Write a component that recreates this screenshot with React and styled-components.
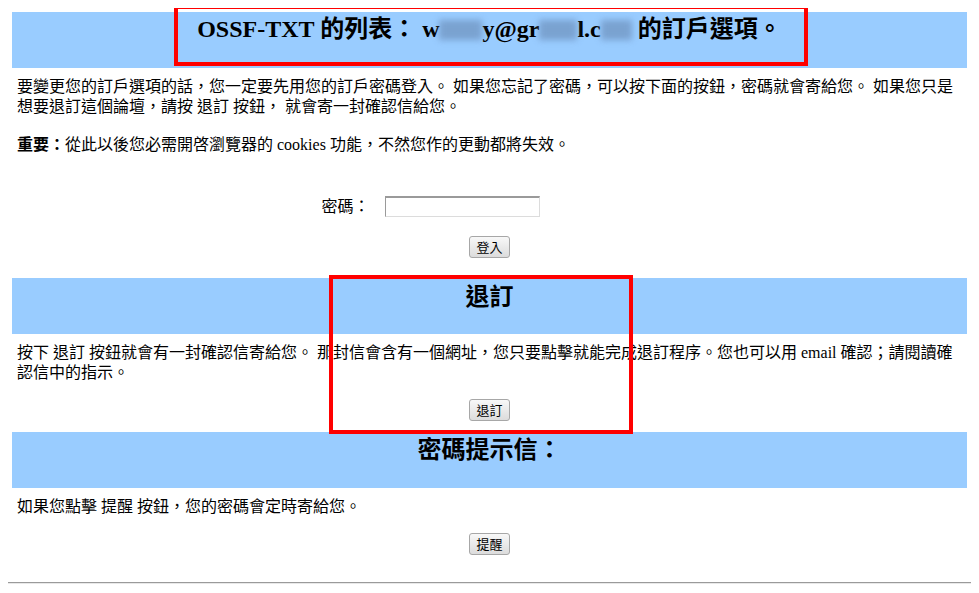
import styled, { createGlobalStyle } from "styled-components";

const GlobalStyle = createGlobalStyle`
  body {
    margin: 8px;
    background: #fff;
    color: #000;
    font-family: "Liberation Serif", "Noto Sans CJK TC", serif;
    font-size: 16px;
  }
`;

const Page = styled.div`
  position: relative;
`;

const Table = styled.div`
  display: flex;
  flex-direction: column;
  gap: 4px;
  padding: 4px;
`;

const Band = styled.div`
  height: 56px;
  box-sizing: border-box;
  padding: ${(props) => props.pad || 5}px 5px 0;
  background: #99ccff;
  text-align: center;
  font-weight: bold;
  font-size: 24px;
  line-height: 24px;
  white-space: nowrap;
`;

const Blur = styled.span`
  display: inline-block;
  width: ${(props) => props.w}px;
  height: 20px;
  vertical-align: -3px;
  background: rgba(96, 128, 170, 0.55);
  filter: blur(3px);
`;

const Cell = styled.div`
  padding: 5px;
  display: flex;
  flex-direction: column;
  padding-bottom: ${(props) => props.bottom || 5}px;
`;

const Para = styled.p`
  margin: ${(props) => props.top || 0}px 0 0;
  line-height: 20px;
`;

const LoginGrid = styled.div`
  width: 472px;
  box-sizing: border-box;
  margin: 41px auto 0;
  padding: 0 7px;
  display: grid;
  grid-template-columns: 114px 1fr;
  column-gap: 10px;
  align-items: center;
`;

const Label = styled.label`
  text-align: right;
  line-height: 20px;
  padding-right: 5px;
`;

const PasswordInput = styled.input`
  width: 155px;
  height: 21px;
  box-sizing: border-box;
  border: 1px solid;
  border-color: #9a9a9a #dcdcdc #dcdcdc #9a9a9a;
  border-top-width: 2px;
  padding: 0 2px;
  background: #fff;
`;

const ButtonRow = styled.div`
  display: flex;
  justify-content: center;
  margin-top: ${(props) => props.top}px;
`;

const Button = styled.button`
  height: 22px;
  box-sizing: border-box;
  padding: 0 6px;
  border: 1px solid #a7a7a7;
  border-radius: 3px;
  background: linear-gradient(#f8f8f8, #dcdcdc);
  font-family: "Noto Sans CJK TC", sans-serif;
  font-size: 13px;
  line-height: 18px;
  color: #000;
`;

const Rule = styled.hr`
  margin: 18px 0 0;
  border: 0;
  border-top: 1px solid #9a9a9a;
  border-bottom: 1px solid #e8e8e8;
`;

const Marker = styled.div`
  position: absolute;
  box-sizing: border-box;
  border: 4px solid #ff0000;
  pointer-events: none;
`;

export default function App() {
  return (
    <Page>
      <GlobalStyle />
      <Table>
        <Band>
          OSSF-TXT 的列表： w<Blur w={43} />y@gr<Blur w={38} />l.c<Blur w={31} /> 的訂戶選項。
        </Band>
        <Cell bottom={5}>
          <Para>
            要變更您的訂戶選項的話，您一定要先用您的訂戶密碼登入。 如果您忘記了密碼，可以按下面的按鈕，密碼就會寄給您。 如果您只是想要退訂這個論壇，請按 退訂 按鈕， 就會寄一封確認信給您。
          </Para>
          <Para top={18}>
            <b>重要：</b>從此以後您必需開啓瀏覽器的 cookies 功能，不然您作的更動都將失效。
          </Para>
          <LoginGrid>
            <Label>密碼：</Label>
            <PasswordInput type="password" />
          </LoginGrid>
          <ButtonRow top={19}>
            <Button>登入</Button>
          </ButtonRow>
          <ButtonRow top={11} />
        </Cell>
        <Band pad={7}>退訂</Band>
        <Cell bottom={7}>
          <Para>
            按下 退訂 按鈕就會有一封確認信寄給您。 那封信會含有一個網址，您只要點擊就能完成退訂程序。您也可以用 email 確認；請閱讀確認信中的指示。
          </Para>
          <ButtonRow top={16}>
            <Button>退訂</Button>
          </ButtonRow>
        </Cell>
        <Band pad={6}>密碼提示信：</Band>
        <Cell>
          <Para>如果您點擊 提醒 按鈕，您的密碼會定時寄給您。</Para>
          <ButtonRow top={16}>
            <Button>提醒</Button>
          </ButtonRow>
        </Cell>
      </Table>
      <Rule />
      <Marker style={{ left: 166, top: -3, width: 634, height: 61 }} />
      <Marker style={{ left: 321, top: 267, width: 304, height: 159 }} />
    </Page>
  );
}
